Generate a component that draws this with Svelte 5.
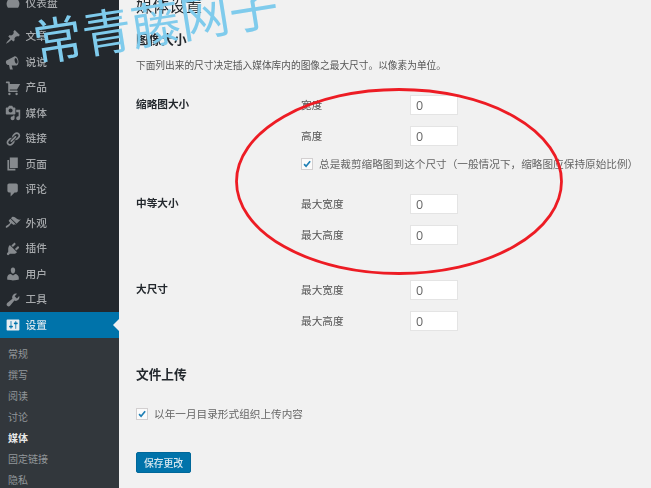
<script>
  const icons = {
    pin: 'M10.44 3.02l1.82-1.82 6.36 6.35-1.83 1.82c-1.05-.68-2.48-.57-3.41.36l-.75.75c-.92.93-1.04 2.35-.35 3.41l-1.83 1.82-2.41-2.41-2.8 2.79c-.42.42-3.38 2.71-3.8 2.29s1.86-3.39 2.28-3.81l2.79-2.79L4.1 9.36l1.83-1.82c1.05.69 2.48.57 3.4-.36l.75-.75c.93-.92 1.05-2.35.36-3.41z',
    megaphone: 'M2 8l9.5-5c1.2-.6 2.5 0 3.6 1.5s1.9 3.6 1.7 6c-.2 2-1 3.300-2.300 3.800H8.300l1.500 5H6.200L5 13.800c-2 0-3.500-1-3.800-3C1 9.500 1.200 8.500 2 8zM13 5c-1 .3-1.300 2-.8 4s1.600 3.300 2.500 3 1.300-2 .8-4-1.600-3.300-2.500-3z',
    cart: 'M6 13h9c.55 0 1 .45 1 1s-.45 1-1 1H5c-.55 0-1-.45-1-1V4H2c-.55 0-1-.45-1-1s.45-1 1-1h3c.55 0 1 .45 1 1v2h13l-4 7H6v1zm-.5 3c.83 0 1.500.67 1.500 1.500S6.330 19 5.500 19 4 18.330 4 17.500 4.670 16 5.500 16zm9 0c.83 0 1.500.67 1.500 1.500s-.67 1.500-1.500 1.500-1.500-.67-1.500-1.500.67-1.500 1.500-1.500z',
    media: 'M13 11V4c0-.55-.45-1-1-1h-1.670L9 1H5L3.670 3H2c-.55 0-1 .45-1 1v7c0 .55.45 1 1 1h10c.55 0 1-.45 1-1zM7 4.500c1.380 0 2.500 1.120 2.500 2.500S8.380 9.500 7 9.500 4.500 8.380 4.500 7 5.620 4.500 7 4.500zM14 6h5v10.500c0 1.380-1.120 2.500-2.500 2.500S14 17.880 14 16.500s1.120-2.500 2.500-2.500c.17 0 .34.02.5.05V9h-3V6zm-4 8.050V13h2v3.500c0 1.380-1.120 2.500-2.500 2.500S7 17.880 7 16.500 8.120 14 9.500 14c.17 0 .34.02.5.05z',
    links: 'M17.740 2.760c1.680 1.690 1.680 4.410 0 6.100l-1.530 1.520c-1.120 1.120-2.700 1.470-4.140 1.090l2.620-2.610.76-.77.76-.76c.84-.84.84-2.200 0-3.040-.84-.85-2.200-.85-3.040 0l-.77.76-3.380 3.380c-.37-1.440-.02-3.020 1.100-4.140l1.520-1.530c1.690-1.680 4.420-1.680 6.100 0zM8.590 13.430l5.340-5.340c.42-.42.42-1.100 0-1.520-.44-.43-1.130-.39-1.530 0l-5.330 5.340c-.42.42-.42 1.100 0 1.520.44.43 1.130.39 1.520 0zm-.76 2.290l4.140-4.150c.38 1.440.03 3.020-1.090 4.140l-1.520 1.530c-1.690 1.680-4.410 1.680-6.100 0-1.680-1.680-1.680-4.420 0-6.100l1.530-1.520c1.120-1.120 2.700-1.470 4.140-1.100l-4.140 4.150c-.85.84-.85 2.200 0 3.050.84.84 2.200.84 3.040 0z',
    page: 'M6 15V2h10v13H6zm-1 1h8v2H3V5h2v11z',
    comment: 'M5 2h9c1.100 0 2 .9 2 2v7c0 1.100-.9 2-2 2h-2l-5 5v-5H5c-1.100 0-2-.9-2-2V4c0-1.100.9-2 2-2z',
    brush: 'M14.480 11.060L7.410 3.990l1.500-1.500c.5-.56 2.300-.47 3.510.32 1.210.8 1.430 1.280 2.910 2.100 1.180.64 2.450 1.260 4.450.85zm-.71.71L6.700 4.700 4.930 6.470c-.39.39-.39 1.020 0 1.410l1.060 1.060c.39.39.39 1.030 0 1.420-.6.6-1.430 1.110-2.210 1.690-.35.26-.7.53-1.010.84C1.430 13.230.4 14.980 1.100 15.680c.7.7 2.450-.33 3.790-1.670.31-.31.58-.66.84-1.010.58-.78 1.090-1.610 1.690-2.210.39-.39 1.030-.39 1.420 0l1.060 1.060c.39.39 1.020.39 1.410 0z',
    plugin: 'M13.110 4.360L9.870 7.600 8 5.730l3.240-3.240c.35-.34 1.050-.2 1.560.32.52.51.66 1.210.31 1.550zm-8 1.770l.91-1.120 9.010 9.010-1.190.84c-.71.71-2.630 1.160-3.820 1.160H6.140L4.900 17.260c-.59.59-1.540.59-2.120 0-.59-.58-.59-1.530 0-2.120l1.240-1.240v-3.880c0-1.130.4-3.190 1.090-3.890zm7.260 3.970l3.240-3.240c.34-.35 1.040-.21 1.550.31.52.51.66 1.210.31 1.550l-3.240 3.250z',
    user: 'M10 9.250c-2.270 0-2.730-3.440-2.730-3.440C7 4.020 7.820 2 9.970 2c2.160 0 2.980 2.020 2.710 3.810 0 0-.41 3.440-2.680 3.440zm0 2.570L12.720 10c2.390 0 4.520 2.330 4.520 4.530v2.490s-3.650 1.130-7.240 1.130c-3.650 0-7.240-1.130-7.240-1.130v-2.490c0-2.250 1.940-4.480 4.470-4.480z',
    wrench: 'M16.680 9.770c-1.340 1.340-3.300 1.670-4.950.99l-5.410 6.520c-.99.99-2.590.99-3.580 0s-.99-2.590 0-3.570l6.520-5.420c-.68-1.650-.35-3.610.99-4.950 1.280-1.280 3.120-1.620 4.720-1.060l-2.890 2.890 2.820 2.820 2.860-2.870c.53 1.580.18 3.390-1.080 4.650z',
    settings: 'M18 16V4c0-.55-.45-1-1-1H3c-.55 0-1 .45-1 1v12c0 .55.45 1 1 1h14c.55 0 1-.45 1-1zM8 11h1c.55 0 1 .45 1 1s-.45 1-1 1H8v1.500c0 .28-.22.5-.5.5s-.5-.22-.5-.5V13H6c-.55 0-1-.45-1-1s.45-1 1-1h1V5.500c0-.28.22-.5.5-.5s.5.22.5.5V11zm5-2h-1c-.55 0-1-.45-1-1s.45-1 1-1h1V5.500c0-.28.22-.5.5-.5s.5.22.5.5V7h1c.55 0 1 .45 1 1s-.45 1-1 1h-1v5.500c0 .28-.22.5-.5.5s-.5-.22-.5-.5V9z',
    dashboard: 'M3.760 16h12.480c1.100-1.370 1.760-3.110 1.760-5 0-4.420-3.580-8-8-8s-8 3.580-8 8c0 1.890.66 3.630 1.760 5z'
  };
  const groupA = [['dashboard', '仪表盘']];
  const groupB = [['pin', '文章'], ['megaphone', '说说'], ['cart', '产品'], ['media', '媒体'], ['links', '链接'], ['page', '页面'], ['comment', '评论']];
  const groupC = [['brush', '外观'], ['plugin', '插件'], ['user', '用户'], ['wrench', '工具']];
  const sub = ['常规', '撰写', '阅读', '讨论', '媒体', '固定链接', '隐私'];
  const sizes = [
    { title: '缩略图大小', fields: ['宽度', '高度'], crop: true },
    { title: '中等大小', fields: ['最大宽度', '最大高度'] },
    { title: '大尺寸', fields: ['最大宽度', '最大高度'] }
  ];
</script>

{#snippet row(item)}
  <div class="item">
    <svg class="icon" viewBox="0 0 20 20" aria-hidden="true"><path fill-rule="evenodd" d={icons[item[0]]} /></svg>
    <span class="lift">{item[1]}</span>
  </div>
{/snippet}

{#snippet check()}
  <span class="box"><svg viewBox="0 0 12 12" aria-hidden="true"><path d="M2.500 6.200l2.400 2.600L9.800 2.600" /></svg></span>
{/snippet}

<div class="page">
  <aside class="side">
    <nav class="menu">
      {#each groupA as item}{@render row(item)}{/each}
      <div class="sep"></div>
      {#each groupB as item}{@render row(item)}{/each}
      <div class="sep"></div>
      {#each groupC as item}{@render row(item)}{/each}
      <div class="item current">
        <svg class="icon" viewBox="0 0 20 20" aria-hidden="true"><path fill-rule="evenodd" d={icons.settings} /></svg>
        <span class="lift">设置</span>
        <i class="arrow"></i>
      </div>
      <div class="submenu">
        {#each sub as s, i}
          <div class="subitem" class:on={i === 4}>{s}</div>
        {/each}
      </div>
    </nav>
  </aside>

  <main class="main">
    <h1>媒体设置</h1>
    <h2 class="first">图像大小</h2>
    <p class="desc">下面列出来的尺寸决定插入媒体库内的图像之最大尺寸。以像素为单位。</p>

    {#each sizes as g, gi}
      <section class="group g{gi}">
        <div class="th">{g.title}</div>
        <div class="fields">
          {#each g.fields as f}
            <div class="field">
              <span class="flabel">{f}</span>
              <input type="text" value="0" readonly aria-label={f} />
            </div>
          {/each}
          {#if g.crop}
            <div class="checkrow crop">{@render check()}<span class="lift">总是裁剪缩略图到这个尺寸（一般情况下，缩略图应保持原始比例）</span></div>
          {/if}
        </div>
      </section>
    {/each}

    <h2 class="upload">文件上传</h2>
    <div class="checkrow year">{@render check()}<span class="lift">以年一月目录形式组织上传内容</span></div>
    <button class="save" type="button">保存更改</button>
  </main>

  <svg class="ring" viewBox="0 0 651 488" aria-hidden="true">
    <ellipse cx="399" cy="181.500" rx="162.500" ry="92" />
  </svg>
  <div class="mark">常青藤网子</div>
</div>

<style>
  :global(body) { margin: 0; background: #f1f1f1; }
  .page {
    position: relative;
    display: flex;
    width: 651px;
    height: 488px;
    overflow: hidden;
    background: #f1f1f1;
    font-family: "Noto Sans CJK SC", "Noto Sans", sans-serif;
    text-spacing-trim: space-all;
    font-feature-settings: "chws" 0, "palt" 0;
  }
  .lift { margin-bottom: 2px; }
  .side {
    flex: 0 0 119px;
    background: #23282d;
    filter: blur(0.5px);
  }
  .menu { margin-top: -9.75px; }
  .sep { height: 8px; }
  .item {
    position: relative;
    display: flex;
    align-items: center;
    gap: 5px;
    height: 25.5px;
    padding-left: 4.5px;
    color: #a6a9ac;
    font-size: 10.7px;
    font-weight: 500;
  }
  .icon { width: 16px; height: 16px; flex: none; fill: #868a8e; }
  .current { background: #0073aa; color: #d5e4ec; height: 26px; }
  .current .icon { fill: #e8eef2; }
  .arrow {
    position: absolute;
    right: 0;
    top: 7px;
    border: 6px solid transparent;
    border-left-width: 0;
    border-right-color: #f1f1f1;
  }
  .submenu { background: #32373c; padding: 4.5px 0 0 8px; height: 160px; }
  .subitem { height: 21px; line-height: 21px; font-size: 10px; color: #92979b; }
  .subitem.on { color: #e8e8e8; font-weight: 700; }

  .main {
    flex: 1;
    padding-left: 17px;
    margin-top: -5px;
    color: #555;
    font-size: 10.65px;
    filter: blur(0.5px);
  }
  h1 { margin: 0; height: 20px; line-height: 20px; font-size: 16.500px; font-weight: 400; color: #23282d; }
  h2 { margin: 0; height: 18px; line-height: 16px; font-size: 12.700px; font-weight: 700; color: #23282d; }
  .first { margin-top: 16px; }
  .desc { margin: 9px 0 0; height: 16px; line-height: 15px; font-size: 9.700px; white-space: nowrap; }
  .group { display: flex; }
  .g0 { margin-top: 21px; }
  .g1 { margin-top: 24px; }
  .g2 { margin-top: 35px; }
  .th { flex: 0 0 165px; height: 20px; line-height: 18px; font-weight: 700; color: #23282d; }
  .fields { display: flex; flex-direction: column; gap: 11px; }
  .field { display: flex; align-items: center; height: 20px; }
  .flabel { flex: 0 0 109px; margin-bottom: 2px; }
  input {
    box-sizing: border-box;
    width: 48px;
    height: 20px;
    margin: 0;
    padding: 0 5px;
    border: 1px solid #e4e4e4;
    background: #fff;
    color: #666;
    font: 12.500px "Open Sans", "Liberation Sans", sans-serif;
    outline: none;
  }
  .checkrow { display: flex; align-items: center; gap: 6px; height: 12px; white-space: nowrap; color: #666; }
  .crop { margin-top: 1px; }
  .box {
    box-sizing: border-box;
    flex: none;
    width: 12px;
    height: 12px;
    border: 1px solid #d2cfd0;
    background: #fbfbfb;
  }
  .box svg { display: block; width: 10px; height: 10px; fill: none; stroke: #1e7fb5; stroke-width: 2; }
  .upload { margin-top: 35px; }
  .year { margin-top: 24px; }
  .save {
    display: block;
    box-sizing: border-box;
    width: 55px;
    height: 21px;
    margin-top: 32px;
    padding: 0;
    border: 1px solid #006799;
    border-radius: 2px;
    background: #0073aa;
    color: #d8e8f0;
    font: 500 9.800px "Noto Sans CJK SC", sans-serif;
  }

  .ring { position: absolute; inset: 0; width: 651px; height: 488px; fill: none; stroke: #ed1c24; stroke-width: 2.800; pointer-events: none; }
  .mark {
    position: absolute;
    left: 33px;
    top: 11px;
    color: #7fcbec;
    font-size: 49.5px;
    line-height: 60px;
    font-weight: 400;
    white-space: nowrap;
    transform: rotate(-9deg);
    transform-origin: left center;
  }
</style>
